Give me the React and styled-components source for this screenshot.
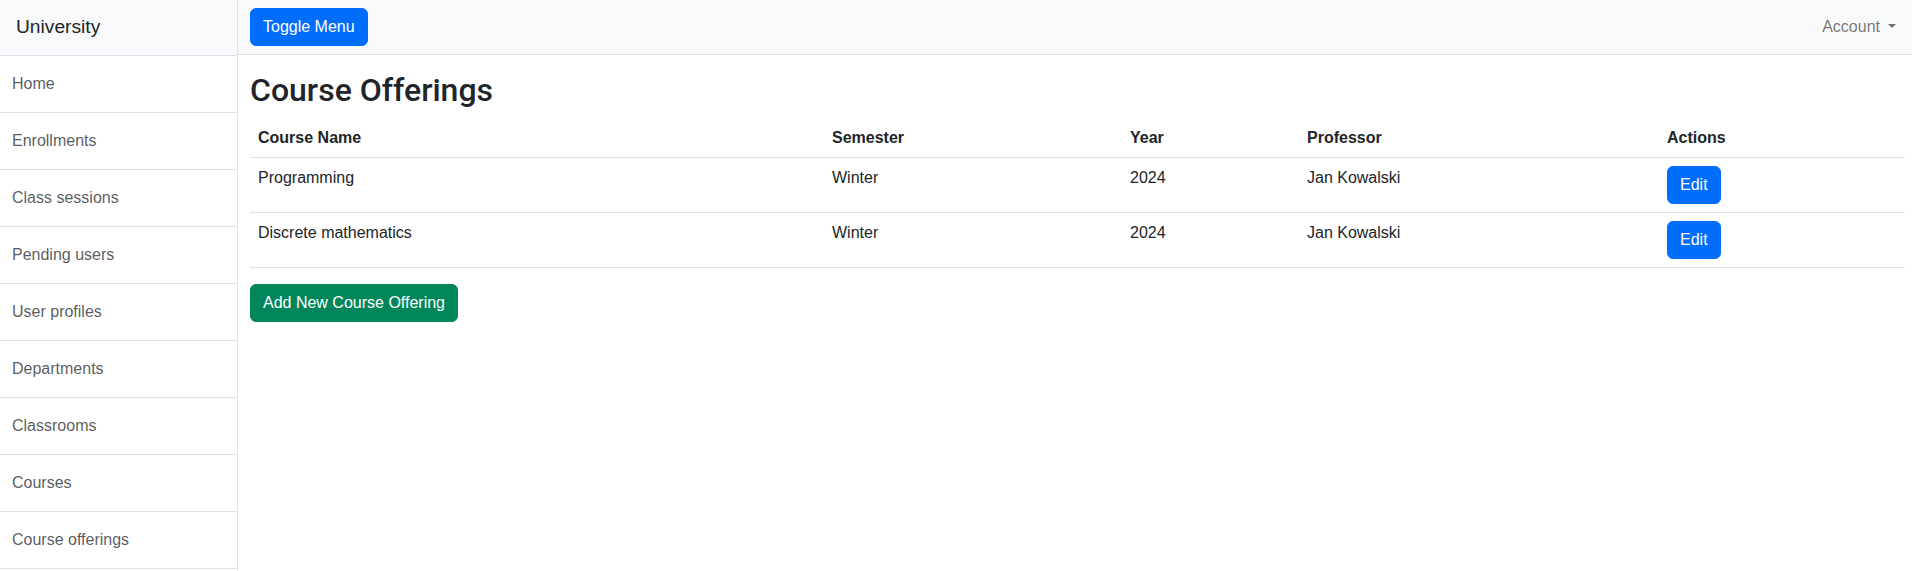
import React from 'react';
import styled, { createGlobalStyle } from 'styled-components';

const GlobalStyle = createGlobalStyle`
  * { box-sizing: border-box; }
  body {
    margin: 0;
    font-family: "Liberation Sans", Arial, sans-serif;
    font-size: 16px;
    line-height: 1.5;
    color: #212529;
    background: #fff;
  }
`;

const menu = [
  'Home',
  'Enrollments',
  'Class sessions',
  'Pending users',
  'User profiles',
  'Departments',
  'Classrooms',
  'Courses',
  'Course offerings',
];

const columns = [
  { title: 'Course Name', width: 574 },
  { title: 'Semester', width: 298 },
  { title: 'Year', width: 177 },
  { title: 'Professor', width: 360 },
  { title: 'Actions', width: 246 },
];

const offerings = [
  { id: 1, name: 'Programming', semester: 'Winter', year: 2024, professor: 'Jan Kowalski' },
  { id: 2, name: 'Discrete mathematics', semester: 'Winter', year: 2024, professor: 'Jan Kowalski' },
];

function App() {
  return (
    <Wrapper>
      <GlobalStyle />
      <Sidebar>
        <SidebarHeading>University</SidebarHeading>
        <MenuList>
          {menu.map((item) => (
            <MenuItem key={item} href="#">{item}</MenuItem>
          ))}
        </MenuList>
      </Sidebar>
      <PageContent>
        <Navbar>
          <Button>Toggle Menu</Button>
          <AccountLink href="#">
            Account
            <Caret />
          </AccountLink>
        </Navbar>
        <Main>
          <Title>Course Offerings</Title>
          <Table>
            <colgroup>
              {columns.map((c) => (
                <col key={c.title} style={{ width: c.width }} />
              ))}
            </colgroup>
            <thead>
              <tr>
                {columns.map((c) => (
                  <Th key={c.title}>{c.title}</Th>
                ))}
              </tr>
            </thead>
            <tbody>
              {offerings.map((o) => (
                <tr key={o.id}>
                  <Td>{o.name}</Td>
                  <Td>{o.semester}</Td>
                  <Td>{o.year}</Td>
                  <Td>{o.professor}</Td>
                  <Td>
                    <Button>Edit</Button>
                  </Td>
                </tr>
              ))}
            </tbody>
          </Table>
          <Button variant="success">Add New Course Offering</Button>
        </Main>
      </PageContent>
    </Wrapper>
  );
}

export default App;

const Wrapper = styled.div`
  display: flex;
  min-height: 571px;
`;

const Sidebar = styled.div`
  width: 238px;
  flex-shrink: 0;
  border-right: 1px solid #dee2e6;
`;

const SidebarHeading = styled.div`
  height: 56px;
  padding: 0 16px 1px;
  display: flex;
  align-items: center;
  font-size: 19.2px;
  background: #f8f9fa;
  border-bottom: 1px solid #dee2e6;
`;

const MenuList = styled.div`
  display: flex;
  flex-direction: column;
`;

const MenuItem = styled.a`
  display: block;
  height: 57px;
  padding: 16px 12px;
  color: rgba(33, 37, 41, 0.75);
  text-decoration: none;
  border-bottom: 1px solid #dee2e6;
  background: #fff;
`;

const PageContent = styled.div`
  flex: 1;
  min-width: 0;
`;

const Navbar = styled.nav`
  height: 55px;
  display: flex;
  align-items: center;
  justify-content: space-between;
  padding: 0 16px 1px 12px;
  background: #f8f9fa;
  border-bottom: 1px solid #dee2e6;
`;

const AccountLink = styled.a`
  display: flex;
  align-items: center;
  color: rgba(0, 0, 0, 0.55);
  text-decoration: none;
`;

const Caret = styled.span`
  display: inline-block;
  margin-left: 8px;
  border-top: 4.5px solid;
  border-right: 4.5px solid transparent;
  border-left: 4.5px solid transparent;
  margin-top: -2px;
`;

const Main = styled.div`
  padding: 16px 7px 0 12px;
`;

const Title = styled.h2`
  margin: 0 0 8px;
  font-family: Roboto, "Liberation Sans", sans-serif;
  font-size: 32px;
  font-weight: 500;
  line-height: 1.2;
`;

const Table = styled.table`
  width: 100%;
  table-layout: fixed;
  border-collapse: collapse;
  margin-bottom: 16px;
`;

const Th = styled.th`
  padding: 9px 8px 7px;
  text-align: left;
  font-weight: 700;
  border-bottom: 1px solid #dee2e6;
`;

const Td = styled.td`
  padding: 8px;
  vertical-align: top;
  border-bottom: 1px solid #dee2e6;
`;

const Button = styled.button`
  display: inline-block;
  height: 38px;
  padding: 6px 12px;
  font-family: inherit;
  font-size: 16px;
  line-height: 24px;
  color: #fff;
  background: ${(p) => (p.variant === 'success' ? '#00865a' : '#006dfc')};
  border: 1px solid ${(p) => (p.variant === 'success' ? '#00865a' : '#006dfc')};
  border-radius: 6px;
  cursor: pointer;
`;
